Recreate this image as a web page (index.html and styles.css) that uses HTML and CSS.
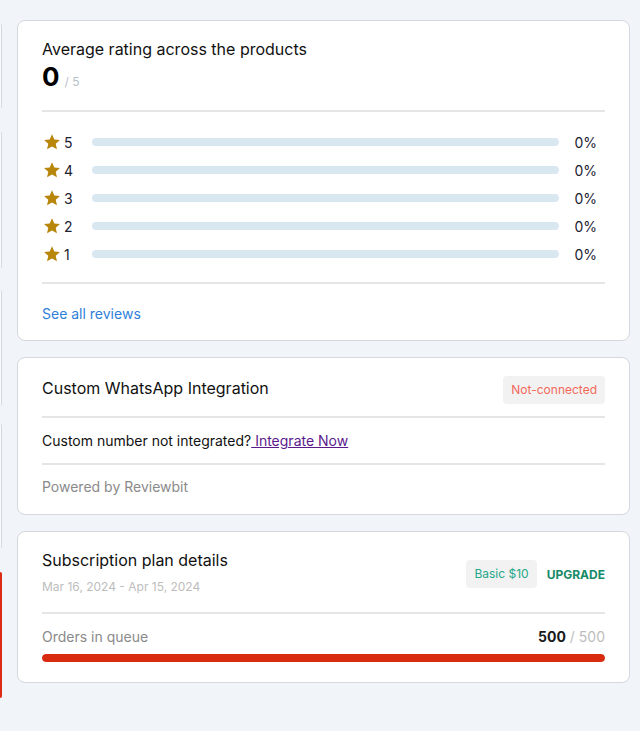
FILE: index.html
```html
<!DOCTYPE html>
<html>
<head>
<meta charset="utf-8">
<link rel="stylesheet" href="styles.css">
</head>
<body>
<div class="page">
  <div class="side">
    <div class="side-card s1"></div>
    <div class="side-card s2"></div>
    <div class="side-card s3"></div>
    <div class="side-card s4"></div>
    <div class="side-card s5 red"></div>
  </div>
  <div class="main">
    <section class="card rating-card">
      <h2 class="card-title">Average rating across the products</h2>
      <div class="score"><span class="score-num">0</span><span class="score-max">/ 5</span></div>
      <hr class="divider">
      <ul class="rows">
        <li class="row"><svg class="star" viewBox="0 0 24 24"><path d="M12 1.6l3.1 6.9 7.5.8-5.6 5.1 1.6 7.4L12 18l-6.6 3.8L7 14.4 1.4 9.3l7.5-.8z"/></svg><span class="row-num">5</span><span class="bar"></span><span class="pct">0%</span></li>
        <li class="row"><svg class="star" viewBox="0 0 24 24"><path d="M12 1.6l3.1 6.9 7.5.8-5.6 5.1 1.6 7.4L12 18l-6.6 3.8L7 14.4 1.4 9.3l7.5-.8z"/></svg><span class="row-num">4</span><span class="bar"></span><span class="pct">0%</span></li>
        <li class="row"><svg class="star" viewBox="0 0 24 24"><path d="M12 1.6l3.1 6.9 7.5.8-5.6 5.1 1.6 7.4L12 18l-6.6 3.8L7 14.4 1.4 9.3l7.5-.8z"/></svg><span class="row-num">3</span><span class="bar"></span><span class="pct">0%</span></li>
        <li class="row"><svg class="star" viewBox="0 0 24 24"><path d="M12 1.6l3.1 6.9 7.5.8-5.6 5.1 1.6 7.4L12 18l-6.6 3.8L7 14.4 1.4 9.3l7.5-.8z"/></svg><span class="row-num">2</span><span class="bar"></span><span class="pct">0%</span></li>
        <li class="row"><svg class="star" viewBox="0 0 24 24"><path d="M12 1.6l3.1 6.9 7.5.8-5.6 5.1 1.6 7.4L12 18l-6.6 3.8L7 14.4 1.4 9.3l7.5-.8z"/></svg><span class="row-num">1</span><span class="bar"></span><span class="pct">0%</span></li>
      </ul>
      <hr class="divider">
      <a class="see-all" href="#">See all reviews</a>
    </section>

    <section class="card wa-card">
      <div class="wa-head">
        <h2 class="card-title">Custom WhatsApp Integration</h2>
        <span class="badge badge-red">Not-connected</span>
      </div>
      <hr class="divider">
      <p class="wa-text">Custom number not integrated?<a class="wa-link" href="#"> Integrate Now</a></p>
      <hr class="divider">
      <p class="powered">Powered by Reviewbit</p>
    </section>

    <section class="card sub-card">
      <div class="sub-head">
        <div class="sub-info">
          <h2 class="card-title">Subscription plan details</h2>
          <p class="dates">Mar 16, 2024 - Apr 15, 2024</p>
        </div>
        <div class="sub-actions">
          <span class="badge badge-green">Basic $10</span>
          <a class="upgrade" href="#">UPGRADE</a>
        </div>
      </div>
      <hr class="divider">
      <div class="queue-head">
        <span class="queue-label">Orders in queue</span>
        <span class="queue-count"><b>500</b> / 500</span>
      </div>
      <div class="queue-bar"><div class="queue-fill" style="width:100%"></div></div>
    </section>
  </div>
</div>
</body>
</html>
```

FILE: styles.css
```css
* { box-sizing: border-box; }
html, body { margin: 0; padding: 0; }
body {
  background: #f1f5f9;
  font-family: Inter, "Noto Sans", sans-serif;
  color: #111;
  width: 640px;
  height: 731px;
  overflow: hidden;
}
.page {
  display: flex;
  gap: 15px;
  padding-top: 20px;
}
.side {
  width: 2px;
  display: flex;
  flex-direction: column;
  flex-shrink: 0;
}
.side-card {
  border-right: 1px solid #d3d8de;
  border-radius: 0 8px 8px 0;
  background: #fbfcfd;
}
.s1 { margin-top: 4px; height: 84px; }
.s2 { margin-top: 24px; height: 136px; }
.s3 { margin-top: 22px; height: 116px; }
.s4 { margin-top: 18px; height: 124px; }
.s5 { margin-top: 24px; height: 126px; }
.side-card.red { background: #dc2d14; border-right-color: #dc2d14; }

.main {
  width: 613px;
  display: flex;
  flex-direction: column;
  gap: 16px;
}
.card {
  background: #fff;
  border: 1px solid #d4d8de;
  border-radius: 8px;
  padding: 0 24px;
}
.card-title {
  margin: 0;
  font-size: 16px;
  font-weight: 400;
  line-height: 20px;
  color: #111;
}
.divider {
  border: 0;
  height: 2px;
  background: #e5e5e5;
  margin: 0;
}

/* rating card */
.rating-card { padding-top: 18px; height: 321px; }
.score { display: flex; align-items: baseline; gap: 5px; margin-top: 1px; height: 50px; }
.score-num { font-size: 26px; font-weight: 700; line-height: 34px; color: #000; }
.score-max { font-size: 12px; color: #b7bfc9; }
.rows { list-style: none; margin: 0; padding: 16px 0 14px; }
.row {
  display: flex;
  align-items: center;
  height: 28px;
}
.star { width: 18px; height: 18px; fill: #b8860b; margin-left: 1px; }
.row-num { font-size: 14px; color: #1c2130; width: 28px; margin-left: 3px; }
.bar {
  flex: 1;
  height: 8px;
  border-radius: 4px;
  background: #d9e7f1;
}
.pct { font-size: 14px; color: #1c2130; width: 46px; text-align: right; padding-right: 8px; }
.see-all {
  display: block;
  margin-top: 21px;
  font-size: 14px;
  color: #2e7fd9;
  text-decoration: none;
  line-height: 18px;
}

/* whatsapp card */
.wa-card { height: 158px; }
.wa-head {
  display: flex;
  justify-content: space-between;
  align-items: center;
  height: 58px;
  padding-top: 1px;
}
.badge {
  font-size: 12px;
  border-radius: 4px;
  background: #f2f2f2;
  line-height: 28px;
  padding: 0 8px;
}
.wa-head .badge { margin-top: 4px; }
.badge-red { color: #f2695a; }
.wa-text {
  margin: 0;
  font-size: 14px;
  line-height: 45px;
  color: #111;
}
.wa-link { color: #5b1a8c; text-decoration: underline; }
.powered {
  margin: 0;
  font-size: 14px;
  line-height: 44px;
  color: #8a8a8a;
}

/* subscription card */
.sub-card { padding-top: 18px; padding-bottom: 20px; }
.sub-head {
  display: flex;
  justify-content: space-between;
  align-items: flex-start;
  padding-bottom: 17px;
}
.sub-info { display: flex; flex-direction: column; }
.dates { margin: 9px 0 0; font-size: 12px; color: #bdbdbd; line-height: 16px; }
.sub-actions { display: flex; align-items: center; gap: 10px; margin-top: 10px; }
.badge-green { color: #24a88a; }
.upgrade {
  font-size: 12px;
  font-weight: 700;
  color: #178a68;
  text-decoration: none;
}
.queue-head {
  display: flex;
  justify-content: space-between;
  align-items: center;
  margin-top: 14px;
  font-size: 14px;
  line-height: 18px;
}
.queue-label { color: #8a8a8a; }
.queue-count { color: #bdbdbd; }
.queue-count b { color: #1a1a1a; font-weight: 700; }
.queue-bar {
  margin-top: 8px;
  height: 8px;
  border-radius: 4px;
  background: #e5e5e5;
  overflow: hidden;
}
.queue-fill { height: 100%; background: #d92b10; border-radius: 4px; }
```
